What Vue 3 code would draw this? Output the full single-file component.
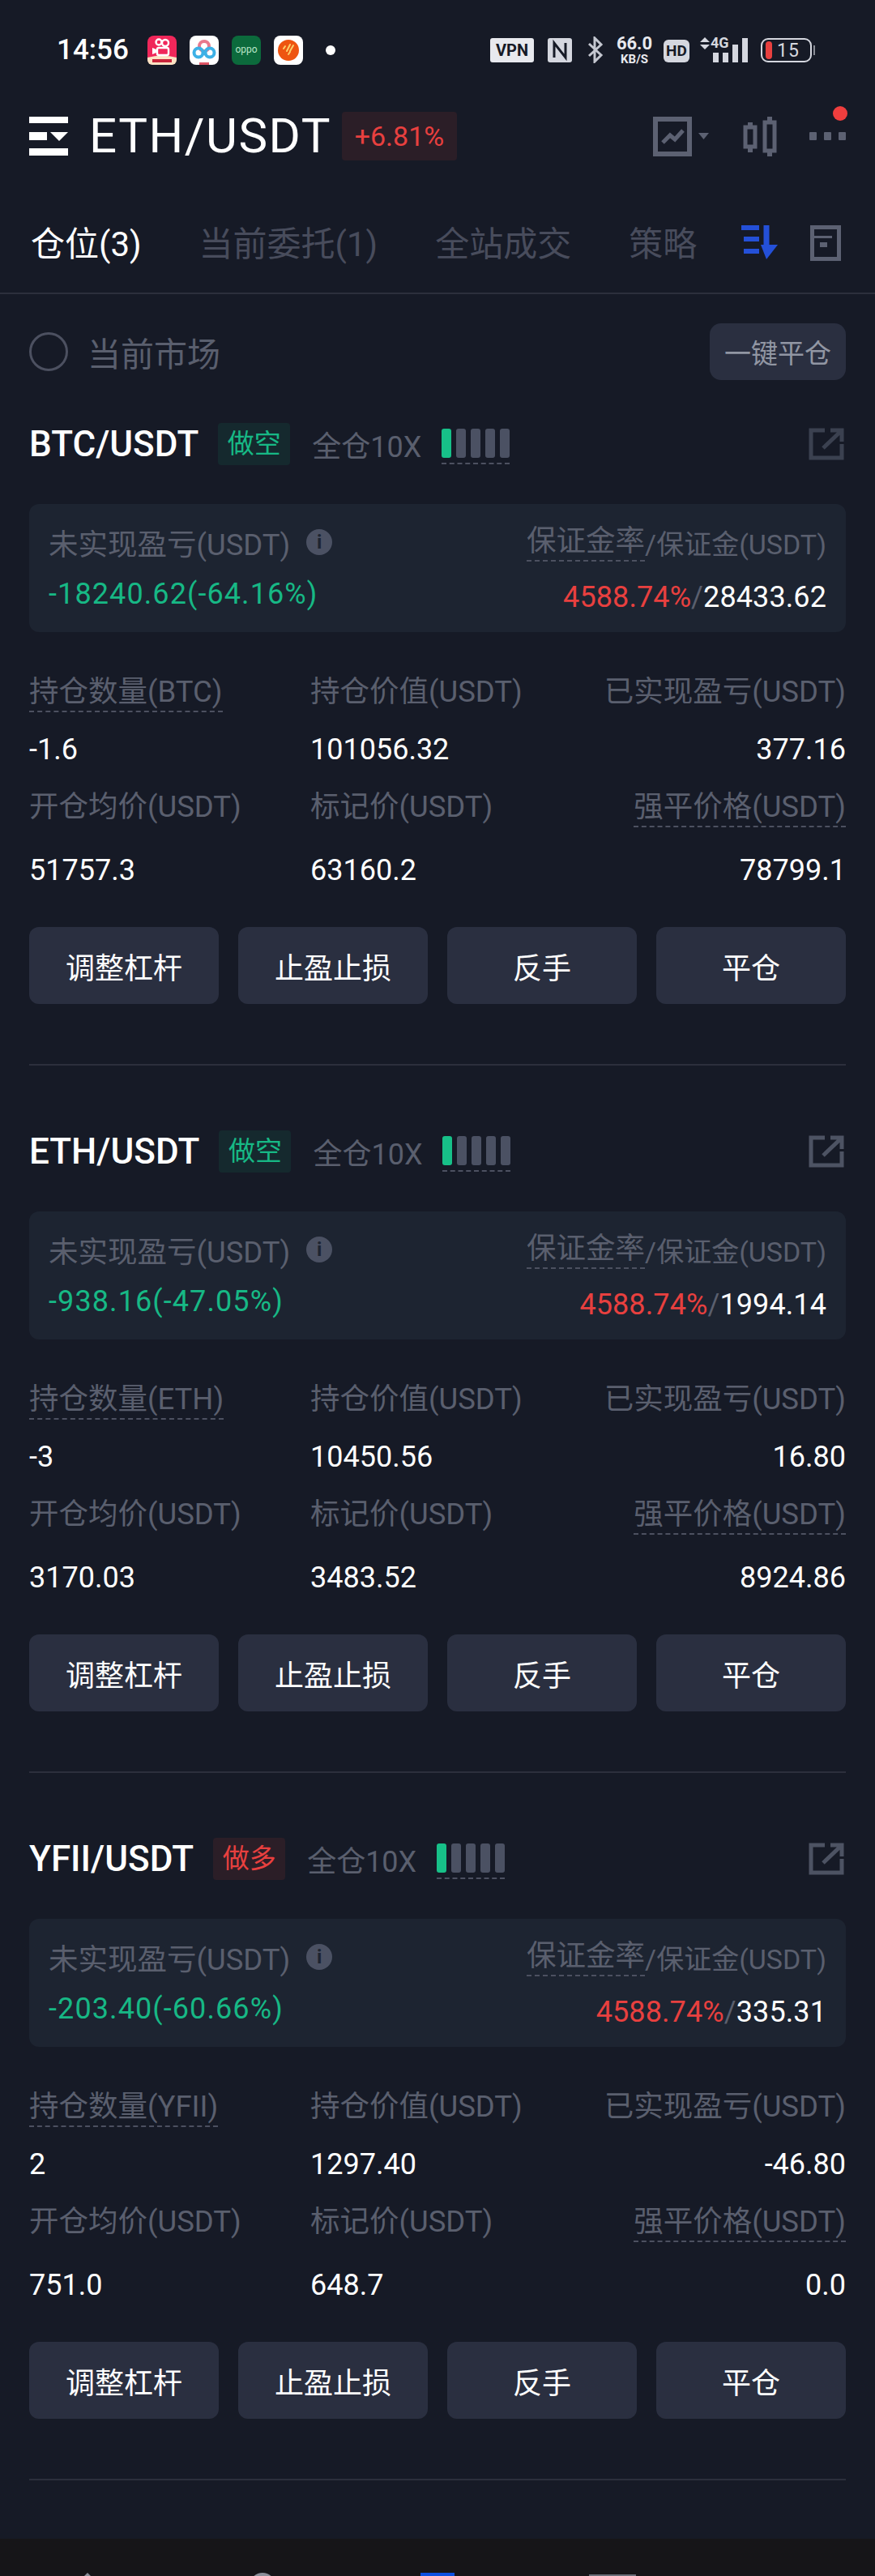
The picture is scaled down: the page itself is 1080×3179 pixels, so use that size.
<script setup>
const positions = [
  {
    symbol: 'BTC/USDT', side: '做空', long: false, coin: 'BTC', dim: true,
    pnl: '-18240.62(-64.16%)', rate: '4588.74%', margin: '28433.62',
    qty: '-1.6', value: '101056.32', realized: '377.16',
    open: '51757.3', mark: '63160.2', liq: '78799.1'
  },
  {
    symbol: 'ETH/USDT', side: '做空', long: false, coin: 'ETH', dim: false,
    pnl: '-938.16(-47.05%)', rate: '4588.74%', margin: '1994.14',
    qty: '-3', value: '10450.56', realized: '16.80',
    open: '3170.03', mark: '3483.52', liq: '8924.86'
  },
  {
    symbol: 'YFII/USDT', side: '做多', long: true, coin: 'YFII', dim: false,
    pnl: '-203.40(-60.66%)', rate: '4588.74%', margin: '335.31',
    qty: '2', value: '1297.40', realized: '-46.80',
    open: '751.0', mark: '648.7', liq: '0.0'
  }
]

const tabs = ['当前委托(1)', '全站成交', '策略']
const actions = ['调整杠杆', '止盈止损', '反手', '平仓']
</script>

<template>
  <div class="page">
    <div class="status">
      <span class="clock">14:56</span>
      <div class="apps">
        <svg width="36" height="36" viewBox="0 0 36 36">
          <rect width="36" height="36" rx="8" fill="#f0275a" />
          <path d="M0 27 Q18 22 36 27 V28 A8 8 0 0 1 36 28 V30 A6 6 0 0 1 30 36 H6 A6 6 0 0 1 0 30 Z" fill="#fde3c4" />
          <circle cx="14" cy="8" r="3.5" fill="none" stroke="#fff" stroke-width="2.4" />
          <circle cx="22" cy="9" r="4" fill="none" stroke="#fff" stroke-width="2.4" />
          <rect x="12" y="15" width="14" height="9" rx="2" fill="none" stroke="#fff" stroke-width="2.4" />
          <path d="M11 17 L6 15 V23 L11 21 Z" fill="#fff" />
          <rect x="6" y="29" width="24" height="4" fill="#c9263c" />
        </svg>
        <svg width="36" height="36" viewBox="0 0 36 36">
          <rect width="36" height="36" rx="8" fill="#fff" />
          <circle cx="18" cy="13" r="6" fill="none" stroke="#e8798d" stroke-width="4" />
          <circle cx="11" cy="21" r="5.5" fill="none" stroke="#3db1e6" stroke-width="4" />
          <circle cx="25" cy="21" r="5.5" fill="none" stroke="#3db1e6" stroke-width="4" />
          <rect x="12" y="33" width="12" height="3" fill="#dd5566" />
        </svg>
        <svg width="36" height="36" viewBox="0 0 36 36">
          <rect width="36" height="36" rx="8" fill="#0c6a3c" />
          <text x="18" y="21" text-anchor="middle" class="oppo">oppo</text>
        </svg>
        <svg width="36" height="36" viewBox="0 0 36 36">
          <rect width="36" height="36" rx="8" fill="#fff" />
          <circle cx="18" cy="18" r="13" fill="#ee5511" />
          <path d="M12 16 L14 13 M16 19 L20 11 M20 19 L24 12 M18 23 L20 20" stroke="#fbd06a" stroke-width="2" stroke-linecap="round" />
        </svg>
      </div>
      <span class="dot"></span>

      <div class="indicators">
        <span class="vpn">VPN</span>
        <svg class="ind-n" width="30" height="30" viewBox="0 0 30 30">
          <rect width="30" height="30" rx="3" fill="#d5d7df" />
          <path d="M8 24 V6 L22 24 V6" fill="none" stroke="#161a26" stroke-width="3" />
        </svg>
        <svg class="ind-bt" width="20" height="33" viewBox="0 0 20 33">
          <path d="M2 9 L17 23 L9 31 V2 L17 10 L2 24" fill="none" stroke="#c4c7d0" stroke-width="3" />
        </svg>
        <div class="speed"><b>66.0</b><small>KB/S</small></div>
        <span class="hd">HD</span>
        <div class="net">
          <svg width="12" height="15" viewBox="0 0 12 15">
            <path d="M6 0 L12 6 H0 Z M0 9 H12 L6 15 Z" fill="#d5d7df" />
          </svg>
          <span class="g4">4G</span>
          <div class="signal">
            <i class="s1"></i><i class="s2"></i><i class="s3"></i><i class="s4"></i>
          </div>
        </div>
        <div class="battery">
          <span class="level"></span>
          <span class="pct">15</span>
        </div>
        <span class="tip"></span>
      </div>
    </div>

    <header class="topbar">
      <svg class="menu" width="48" height="48" viewBox="0 0 48 48">
        <rect width="48" height="8" fill="#fff" />
        <rect y="19" width="22" height="10" fill="#fff" />
        <path d="M26 19 H48 L37 30 Z" fill="#fff" />
        <rect y="39" width="48" height="9" fill="#fff" />
      </svg>
      <h1>ETH/USDT</h1>
      <span class="change">+6.81%</span>
      <div class="top-icons">
        <svg width="48" height="49" viewBox="0 0 48 49">
          <rect x="3" y="3" width="42" height="43" fill="none" stroke="#5c6172" stroke-width="6" />
          <path d="M12 32 L21 23 L27 28 L37 17" fill="none" stroke="#5c6172" stroke-width="5" />
        </svg>
        <svg class="caret" width="13" height="8" viewBox="0 0 13 8">
          <path d="M0 0 H13 L6.5 8 Z" fill="#5c6172" />
        </svg>
        <svg class="candles" width="42" height="49" viewBox="0 0 42 49">
          <path d="M9 7 V44 M33 0 V49" stroke="#5c6172" stroke-width="6" />
          <rect x="3" y="13" width="12" height="24" fill="#161a26" stroke="#5c6172" stroke-width="5" />
          <rect x="27" y="7" width="12" height="35" fill="#161a26" stroke="#5c6172" stroke-width="5" />
        </svg>
        <div class="more">
          <i></i><i></i><i></i>
          <span class="red-dot"></span>
        </div>
      </div>
    </header>

    <nav class="tabs">
      <span class="tab active">仓位(3)</span>
      <span v-for="t in tabs" :key="t" class="tab">{{ t }}</span>
      <div class="tab-icons">
        <svg width="45" height="42" viewBox="0 0 45 42">
          <path d="M0 3 H22 M3 17 H22 M3 32 H22" stroke="#2450d8" stroke-width="6" />
          <path d="M31 0 V30" stroke="#2450d8" stroke-width="7" />
          <path d="M24 24 H45 L31 42 Z" fill="#2450d8" />
        </svg>
        <svg width="38" height="44" viewBox="0 0 38 44">
          <rect x="2.5" y="2.5" width="33" height="39" fill="none" stroke="#5c6172" stroke-width="5" />
          <rect x="5" y="13" width="22" height="3" fill="#5c6172" />
          <rect x="12" y="21" width="9" height="6" fill="#5c6172" />
        </svg>
      </div>
    </nav>

    <div class="filter">
      <span class="radio"></span>
      <span class="filter-text">当前市场</span>
      <button class="close-all">一键平仓</button>
    </div>

    <section v-for="p in positions" :key="p.symbol" class="position">
      <div class="head">
        <span class="symbol">{{ p.symbol }}</span>
        <span class="side" :class="{ long: p.long }">{{ p.side }}</span>
        <span class="mode">全仓10X</span>
        <div class="bars">
          <i class="on"></i><i></i><i></i><i></i><i></i>
        </div>
        <svg class="share" :class="{ dim: p.dim }" width="44" height="40" viewBox="0 0 44 40">
          <path d="M20 3 H3 V37 H41 V20" fill="none" stroke="currentColor" stroke-width="5" />
          <path d="M18 25 L40 4 M27 3 H41 V17" fill="none" stroke="currentColor" stroke-width="5" />
        </svg>
      </div>

      <div class="card">
        <div class="card-col">
          <div class="card-label">
            未实现盈亏(USDT)
            <span class="info">i</span>
          </div>
          <div class="pnl">{{ p.pnl }}</div>
        </div>
        <div class="card-col right">
          <div class="card-label"><span class="dashed">保证金率</span><span class="rest">/保证金(USDT)</span></div>
          <div class="ratio"><span class="red">{{ p.rate }}</span><span class="slash">/</span>{{ p.margin }}</div>
        </div>
      </div>

      <div class="stats">
        <div class="cell"><span class="dashed">持仓数量({{ p.coin }})</span></div>
        <div class="cell">持仓价值(USDT)</div>
        <div class="cell end">已实现盈亏(USDT)</div>
        <div class="cell val">{{ p.qty }}</div>
        <div class="cell val">{{ p.value }}</div>
        <div class="cell val end">{{ p.realized }}</div>
        <div class="cell">开仓均价(USDT)</div>
        <div class="cell">标记价(USDT)</div>
        <div class="cell end"><span class="dashed">强平价格(USDT)</span></div>
        <div class="cell val low">{{ p.open }}</div>
        <div class="cell val low">{{ p.mark }}</div>
        <div class="cell val low end">{{ p.liq }}</div>
      </div>

      <div class="actions">
        <button v-for="a in actions" :key="a" class="action">{{ a }}</button>
      </div>
    </section>

    <div class="bottom">
      <span class="nav-tri"></span>
      <span class="nav-round"></span>
      <span class="nav-blue"></span>
      <span class="nav-gray"></span>
    </div>
  </div>
</template>

<style>
html, body {
  margin: 0;
  background: #161a26;
}
</style>

<style scoped>
.page {
  width: 1080px;
  height: 3179px;
  overflow: hidden;
  background: #161a26;
  color: #fff;
  font-family: Roboto, "Noto Sans CJK SC", sans-serif;
}

/* status bar */
.status {
  height: 132px;
  box-sizing: border-box;
  padding: 44px 0 0 70px;
  display: flex;
  align-items: flex-start;
}
.clock {
  width: 112px;
  font-size: 35px;
  line-height: 36px;
  font-weight: 500;
}
.apps {
  display: flex;
  gap: 16px;
}
.apps svg { display: block; }
.oppo {
  font-family: Roboto, sans-serif;
  font-size: 12px;
  fill: #b9e6c8;
}
.dot {
  width: 12px;
  height: 12px;
  margin: 12px 0 0 28px;
  border-radius: 50%;
  background: #fff;
}
.indicators {
  margin-left: 191px;
  display: flex;
  align-items: flex-start;
}
.vpn {
  width: 54px;
  height: 30px;
  margin-top: 3px;
  background: #e8e9ee;
  border-radius: 3px;
  color: #161a26;
  font-size: 20px;
  line-height: 30px;
  font-weight: 700;
  text-align: center;
}
.ind-n { margin: 3px 0 0 17px; }
.ind-bt { margin: 1px 0 0 19px; }
.speed {
  width: 50px;
  margin-left: 13px;
  text-align: center;
  color: #e8e9ee;
}
.speed b {
  display: block;
  font-size: 22px;
  line-height: 20px;
  font-weight: 700;
}
.speed small {
  display: block;
  margin-top: 1px;
  font-size: 15px;
  line-height: 16px;
  font-weight: 700;
}
.hd {
  width: 32px;
  height: 28px;
  margin: 5px 0 0 11px;
  background: #d5d7df;
  border-radius: 6px;
  color: #161a26;
  font-size: 19px;
  line-height: 28px;
  font-weight: 700;
  text-align: center;
}
.net {
  position: relative;
  width: 60px;
  height: 34px;
  margin-left: 13px;
}
.net svg {
  position: absolute;
  left: 0;
  top: 2px;
}
.g4 {
  position: absolute;
  left: 13px;
  top: 0;
  font-size: 18px;
  line-height: 18px;
  font-weight: 700;
  color: #d5d7df;
}
.signal {
  position: absolute;
  left: 16px;
  bottom: 1px;
  display: flex;
  align-items: flex-end;
  gap: 5px;
}
.signal i {
  width: 7px;
  background: #d5d7df;
}
.s1 { height: 12px; }
.s2 { height: 12px; }
.s3 { height: 22px; }
.s4 { height: 30px; }
.battery {
  width: 63px;
  height: 30px;
  box-sizing: border-box;
  margin: 3px 0 0 15px;
  padding: 3px 4px;
  border: 2px solid #d5d7df;
  border-radius: 9px;
  display: flex;
  align-items: center;
}
.level {
  width: 8px;
  height: 22px;
  background: #e8403f;
  border-radius: 4px;
}
.pct {
  margin-left: 6px;
  font-size: 23px;
  color: #d5d7df;
  letter-spacing: 1px;
}
.tip {
  width: 2px;
  height: 12px;
  margin: 12px 0 0 2px;
  background: #8a8d96;
}

/* title row */
.topbar {
  height: 72px;
  padding: 0 36px;
  display: flex;
  align-items: center;
}
.menu { flex: none; }
.topbar h1 {
  margin: 0 0 0 26px;
  font-size: 60px;
  line-height: 72px;
  font-weight: 400;
  letter-spacing: 1.5px;
}
.change {
  margin-left: 13px;
  width: 142px;
  height: 60px;
  background: #2b1e27;
  border-radius: 4px;
  color: #e8403f;
  font-size: 34px;
  line-height: 60px;
  text-align: center;
}
.top-icons {
  margin-left: auto;
  display: flex;
  align-items: center;
}
.caret { margin: 0 0 0 8px; }
.candles { margin-left: 42px; }
.more {
  position: relative;
  margin-left: 40px;
  display: flex;
  gap: 9px;
}
.more i {
  width: 9px;
  height: 10px;
  background: #5c6172;
  border-radius: 1px;
}
.red-dot {
  position: absolute;
  left: 29px;
  top: -32px;
  width: 18px;
  height: 18px;
  border-radius: 50%;
  background: #ef3e3e;
}

/* tabs */
.tabs {
  height: 159px;
  box-sizing: border-box;
  padding: 68px 42px 0 38px;
  display: flex;
  align-items: flex-start;
  border-bottom: 2px solid #2c2f3c;
}
.tab {
  font-size: 42px;
  line-height: 60px;
  color: #484c5c;
  margin-left: 71px;
  white-space: nowrap;
}
.tab.active {
  margin-left: 0;
  color: #fff;
}
.tab-icons {
  margin: 6px 0 0 auto;
  display: flex;
  gap: 40px;
}

/* market filter */
.filter {
  height: 70px;
  margin-top: 36px;
  padding: 0 36px;
  display: flex;
  align-items: center;
}
.radio {
  width: 48px;
  height: 48px;
  box-sizing: border-box;
  border: 3px solid #4c5060;
  border-radius: 50%;
}
.filter-text {
  margin-left: 24px;
  font-size: 41px;
  color: #5a5f6e;
}
.close-all {
  margin-left: auto;
  width: 168px;
  height: 70px;
  padding: 0;
  border: 0;
  border-radius: 14px;
  background: #2a2f40;
  color: #9196a3;
  font: inherit;
  font-size: 33px;
}

/* position */
.position {
  margin: 53px 36px 80px;
  padding-bottom: 74px;
  border-bottom: 2px solid #2c2f3c;
  font-size: 36px;
}
.head {
  height: 52px;
  display: flex;
  align-items: center;
}
.symbol {
  font-size: 44px;
  font-weight: 500;
}
.side {
  margin-left: 24px;
  width: 89px;
  height: 52px;
  background: #15292e;
  border-radius: 4px;
  color: #17b885;
  font-size: 33px;
  line-height: 52px;
  text-align: center;
}
.side.long {
  background: #2b1e27;
  color: #e8403f;
}
.mode {
  margin-left: 27px;
  font-size: 36px;
  color: #5a5f6e;
}
.bars {
  margin: 0 0 0 25px;
  padding-bottom: 6px;
  display: flex;
  gap: 6px;
  border-bottom: 2px dashed #4c5060;
  transform: translateY(3px);
}
.bars i {
  width: 12px;
  height: 36px;
  background: #4b5163;
  border-radius: 3px;
}
.bars i.on { background: #17c088; }
.share {
  margin-left: auto;
  margin-right: 2px;
  color: #4d5363;
}
.share.dim { color: #3b4150; }
.card {
  margin-top: 48px;
  height: 158px;
  box-sizing: border-box;
  padding: 24px 24px 0;
  background: #1d2431;
  border-radius: 12px;
  display: flex;
  justify-content: space-between;
}
.card-label {
  height: 46px;
  display: flex;
  align-items: center;
  font-size: 36.5px;
  color: #5a5f6e;
  white-space: nowrap;
}
.rest { font-size: 34px; }
.info {
  width: 32px;
  height: 32px;
  margin-left: 20px;
  border-radius: 50%;
  background: #4b5163;
  color: #1d2431;
  font-size: 24px;
  font-weight: 700;
  line-height: 32px;
  text-align: center;
}
.pnl {
  margin-top: 18px;
  line-height: 46px;
  color: #17b885;
  letter-spacing: 1.1px;
}
.right { text-align: right; }
.right .card-label { justify-content: flex-end; }
.ratio {
  margin-top: 22px;
  line-height: 46px;
  letter-spacing: 0.1px;
}
.red { color: #e8403f; }
.slash { color: #5a5f6e; }
.dashed {
  display: inline-block;
  line-height: 46px;
  border-bottom: 2px dashed #4c5060;
}
.stats {
  margin-top: 48px;
  display: grid;
  grid-template-columns: 347px 1fr auto;
  grid-template-rows: 52px 90px 52px 77px;
  font-size: 36.5px;
  color: #5a5f6e;
}
.cell {
  line-height: 52px;
  white-space: nowrap;
}
.val {
  font-size: 36px;
  color: #fff;
  padding-top: 22px;
  line-height: 46px;
}
.val.low { padding-top: 29px; }
.end { text-align: right; }
.actions {
  margin-top: 45px;
  display: grid;
  grid-template-columns: repeat(4, 234px);
  gap: 24px;
}
.action {
  height: 95px;
  padding: 0;
  border: 0;
  border-radius: 12px;
  background: #2a2f40;
  color: #fff;
  font: inherit;
  font-size: 36px;
}

/* navigation peeking from the bottom edge */
.bottom {
  height: 60px;
  box-sizing: border-box;
  margin-top: -8px;
  padding-top: 42px;
  background: #161518;
  display: grid;
  grid-template-columns: repeat(4, 216px);
  justify-items: center;
  align-items: start;
}
.nav-tri {
  width: 0;
  height: 0;
  border: 6px solid transparent;
  border-bottom-color: #8b8f99;
  border-top: 0;
}
.nav-round {
  width: 32px;
  height: 32px;
  border-radius: 50%;
  background: #8b8f99;
}
.nav-blue {
  width: 42px;
  height: 10px;
  background: #0b50e0;
}
.nav-gray {
  width: 58px;
  height: 6px;
  margin-top: 2px;
  background: #6a6e78;
}
</style>
